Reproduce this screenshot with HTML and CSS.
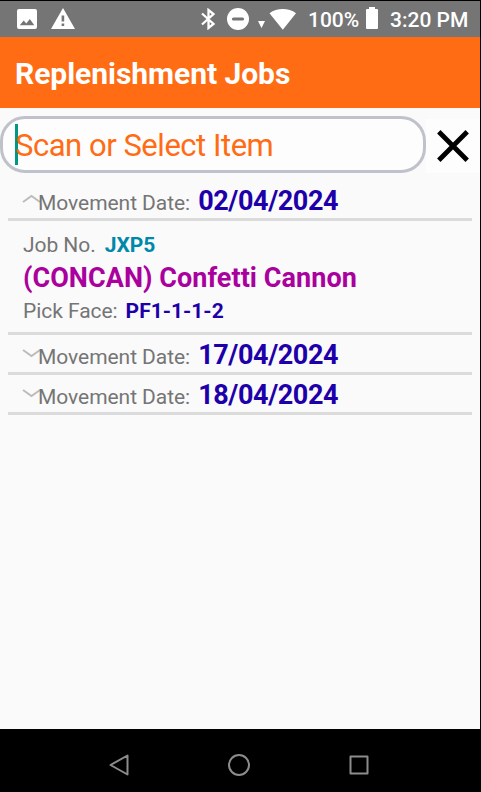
FILE: index.html
```html
<!DOCTYPE html>
<html lang="en">
<head>
<meta charset="utf-8">
<title>Replenishment Jobs</title>
<link rel="stylesheet" href="styles.css">
</head>
<body>
<div class="screen">
  <div class="status">
    <svg class="i-image" width="20" height="20" viewBox="0 0 20 20"><path fill="#fff" fill-rule="evenodd" d="M2 0h16a2 2 0 0 1 2 2v16a2 2 0 0 1-2 2H2a2 2 0 0 1-2-2V2a2 2 0 0 1 2-2zM2.800 16.300h14.500L12.800 10l-3.500 4.500-2.600-3z"/></svg>
    <svg class="i-warn" width="24" height="21" viewBox="0 0 24 21"><path fill="#fff" fill-rule="evenodd" d="M12 0l12 21H0zM10.600 7.500v6h2.600v-6zM10.600 15.500v2.500h2.600v-2.500z"/></svg>
    <svg class="i-bt" width="15" height="22" viewBox="0 0 15 22"><path fill="none" stroke="#fff" stroke-width="2.300" d="M1 5.500L12.500 16l-5 4V2L12.500 6 1 16.500"/></svg>
    <svg class="i-dnd" width="22" height="22" viewBox="0 0 22 22"><circle cx="11" cy="11" r="11" fill="#fff"/><path stroke="#757575" stroke-width="3.200" stroke-linecap="round" d="M6.500 11h9"/></svg>
    <svg class="i-wifi" width="38" height="21" viewBox="0 0 38 21"><path fill="#fff" d="M0 12h7l-3.500 7zM11.500 4.200C19-1.400 30.500-1.400 38 4.200L24.800 20.800z"/></svg>
    <span class="pct">100%</span>
    <svg class="i-bat" width="12" height="22" viewBox="0 0 12 22"><path fill="#fff" d="M3 0h6v2h2a1 1 0 0 1 1 1v18a1 1 0 0 1-1 1H1a1 1 0 0 1-1-1V3a1 1 0 0 1 1-1h2z"/></svg>
    <span class="time">3:20 PM</span>
  </div>
  <header class="appbar"><h1>Replenishment Jobs</h1></header>
  <div class="search">
    <div class="field"><span class="caret"></span><span class="hint">Scan or Select Item</span></div>
    <div class="clear"><svg width="32" height="32" viewBox="0 0 32 32"><path stroke="#000" stroke-width="4.800" d="M1.800 1.800l28.400 28.400M30.200 1.800l-28.400 28.400"/></svg></div>
  </div>
  <main class="list">
    <div class="row"><svg class="chev" width="20" height="10" viewBox="0 0 20 10"><path d="M1 8l8.500-6L18 8"/></svg><span class="label">Movement Date:</span><b class="date">02/04/2024</b></div>
    <div class="job">
      <div class="line"><span class="label">Job No.</span><b class="num">JXP5</b></div>
      <div class="item">(CONCAN) Confetti Cannon</div>
      <div class="line"><span class="label">Pick Face:</span><b class="face">PF1-1-1-2</b></div>
    </div>
    <div class="row"><svg class="chev" width="20" height="10" viewBox="0 0 20 10"><path d="M1 2l8.500 6L18 2"/></svg><span class="label">Movement Date:</span><b class="date">17/04/2024</b></div>
    <div class="row"><svg class="chev" width="20" height="10" viewBox="0 0 20 10"><path d="M1 2l8.500 6L18 2"/></svg><span class="label">Movement Date:</span><b class="date">18/04/2024</b></div>
  </main>
  <nav class="nav">
    <svg width="24" height="24" viewBox="0 0 24 24"><path d="M20.500 2.500v19L3.500 12z"/></svg>
    <svg width="24" height="24" viewBox="0 0 24 24"><circle cx="12" cy="12" r="10"/></svg>
    <svg width="24" height="24" viewBox="0 0 24 24"><path d="M3.500 3.500h17v17h-17z"/></svg>
  </nav>
</div>
</body>
</html>
```
FILE: styles.css
```css
* { box-sizing: border-box; }
body { margin: 0; background: #000; font-family: Roboto, sans-serif; white-space: nowrap; }
svg { display: block; flex: none; }
.screen { width: 480px; height: 792px; padding-top: 1px; display: flex; flex-direction: column; background: #000; overflow: hidden; }
.status { height: 36px; flex: none; display: flex; align-items: flex-start; background: #757575; color: #fff; font-size: 21px; font-weight: 500; line-height: 24px; padding-left: 17px; }
.i-image { margin-top: 8px; }
.i-warn { margin: 7px 0 0 14px; }
.i-bt { margin: 7px 0 0 126px; }
.i-dnd { margin: 7px 0 0 11px; }
.i-wifi { margin: 8px 0 0 9px; }
.pct { width: 58px; margin: 7px 0 0 12px; }
.i-bat { margin-top: 6px; }
.time { margin: 7px 0 0 12px; }
.appbar { height: 71px; flex: none; display: flex; align-items: center; padding: 3px 0 0 15px; background: #ff6c14; color: #fff; }
.appbar h1 { margin: 0; font-size: 30px; line-height: 36px; font-weight: 700; letter-spacing: -0.04px; }
.search { height: 73px; flex: none; padding-top: 8px; display: flex; align-items: flex-start; background: #fafafa; }
.field { width: 426px; height: 57px; border: 3px solid #bfc2ca; border-radius: 25px; background: #fdfdfd; display: flex; align-items: center; padding-left: 12px; }
.caret { width: 3px; height: 41px; background: #009688; margin-right: -3px; }
.hint { color: #ff6c14; font-size: 31px; line-height: 36px; padding-top: 2px; letter-spacing: -0.47px; }
.clear { width: 54px; height: 54px; margin-top: 3px; background: #fdfdfd; display: flex; align-items: center; justify-content: center; }
.list { flex: 1; padding: 0 8px; background: #fafafa; }
.row { height: 40px; border-bottom: 3px solid #dbdbdb; display: flex; align-items: baseline; padding-left: 14px; line-height: 40px; }
.chev { align-self: flex-start; margin: 13px -4px 0 0; }
.chev path { fill: none; stroke: #bcbcbc; stroke-width: 2; }
.label { color: #757575; font-size: 21px; letter-spacing: -0.05px; }
.date { color: #1e00aa; font-size: 27px; margin-left: 8px; letter-spacing: -0.4px; }
.job { height: 114px; border-bottom: 3px solid #dbdbdb; padding: 8px 0 0 15px; }
.line { display: flex; font-size: 21px; line-height: 32px; }
.line b { margin-left: 8px; }
.item { color: #aa009e; font-size: 27px; font-weight: 700; line-height: 34px; letter-spacing: 0.05px; }
.line .num { color: #0088aa; margin-left: 9px; }
.face { color: #1e00aa; }
.nav { height: 63px; flex: none; display: flex; justify-content: center; gap: 96px; padding: 24px 2px 0 0; background: #000; }
.nav path, .nav circle { fill: none; stroke: #8c8c8c; stroke-width: 2; stroke-linejoin: round; }
```
